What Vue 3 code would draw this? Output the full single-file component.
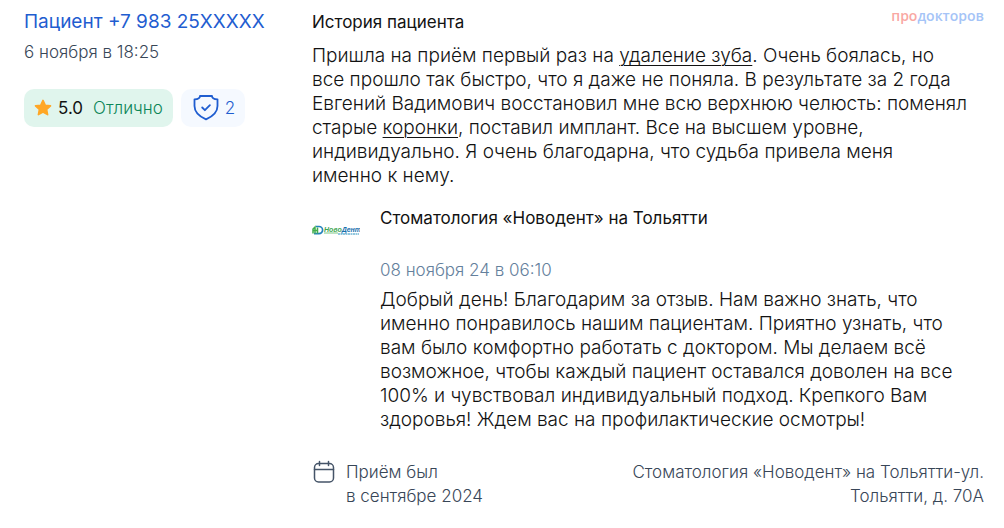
<script setup>
const rating = { score: '5.0', label: 'Отлично' }
const checks = 2
</script>

<template>
  <article class="review">
    <aside class="side">
      <a class="author" href="#">Пациент +7 983 25XXXXX</a>
      <time class="date">6 ноября в 18:25</time>
      <div class="badges">
        <div class="badge rating">
          <svg class="star" viewBox="0 0 18 18" aria-hidden="true">
            <path d="M9 1.400l2.200 4.800 5.300.6-3.900 3.600 1 5.200L9 13l-4.600 2.600 1-5.200L1.500 6.800l5.300-.6z" fill="#ffa726" stroke="#ffa726" stroke-width="1.600" stroke-linejoin="round" />
          </svg>
          <span class="score">{{ rating.score }}</span>
          <span>{{ rating.label }}</span>
        </div>
        <button class="badge checks" type="button" aria-label="Проверки отзыва: 2">
          <svg class="shield" viewBox="0 0 26 26" fill="none" stroke="#1f5dd0" stroke-width="1.800" stroke-linecap="round" stroke-linejoin="round" aria-hidden="true">
            <path d="M7 1h12c0 2 1.500 3.200 5.500 3.300v6.700c0 6.300-4.500 10.300-11.500 13.300C6 21.300 1.500 17.300 1.500 11V4.300C5.500 4.200 7 3 7 1z" />
            <path d="M9.200 12.500l2.700 2.700 5-5" />
          </svg>
          <span>{{ checks }}</span>
        </button>
      </div>
    </aside>

    <div class="main">
      <header class="head">
        <h2 class="title">История пациента</h2>
        <span class="brand"><span class="pro">про</span>докторов</span>
      </header>
      <p class="text">
        Пришла на приём первый раз на <a href="#">удаление зуба</a>. Очень боялась, но все&nbsp;прошло так быстро, что я даже не поняла. В результате за 2 года Евгений Вадимович восстановил мне всю верхнюю челюсть: поменял старые <a href="#">коронки</a>, поставил имплант. Все на высшем уровне, индивидуально. Я очень благодарна, что судьба привела меня именно&nbsp;к&nbsp;нему.
      </p>

      <section class="reply">
        <svg class="logo" viewBox="0 0 48 48" role="img" aria-label="НовоДент">
          <path d="M4 20.500h3a3.600 3.600 0 0 1 0 7.200H2" fill="none" stroke="#2583bd" stroke-width="1.700" />
          <path d="M1 27.500v-4.500l2-2v6.500M1 24.500h5M5.500 21.500v6" fill="none" stroke="#42ad4c" stroke-width="1.500" />
          <text x="12" y="26" class="logo-name"><tspan fill="#42a653">Ново</tspan><tspan fill="#176fad">Дент</tspan></text>
          <path d="M12 27h14" stroke="#7cc886" stroke-width="1" />
          <path d="M26 28h21" stroke="#70b5d4" stroke-width="1.500" stroke-dasharray="2 .5" />
        </svg>
        <div class="reply-body">
          <h3 class="title">Стоматология «Новодент» на Тольятти</h3>
          <time class="reply-date">08 ноября 24 в 06:10</time>
          <p class="text">
            Добрый день! Благодарим за отзыв. Нам важно знать, что именно понравилось нашим пациентам. Приятно узнать, что вам&nbsp;было комфортно работать с доктором. Мы делаем всё возможное, чтобы каждый пациент оставался доволен на все 100% и чувствовал индивидуальный подход. Крепкого Вам здоровья! Ждем вас на профилактические осмотры!
          </p>
        </div>
      </section>

      <footer class="foot">
        <svg class="calendar" viewBox="0 0 24 24" fill="none" stroke="#455468" stroke-width="1.500" stroke-linecap="round" aria-hidden="true">
          <rect x="2.500" y="3.500" width="19" height="18.500" rx="4" />
          <path d="M2.500 9.500h19M7.500 1.500v4M16.500 1.500v4" />
        </svg>
        <span>Приём был<br />в сентябре 2024</span>
        <address class="place">Стоматология «Новодент» на Тольятти-ул. Тольятти, д. 70А</address>
      </footer>
    </div>
  </article>
</template>

<style>
body {
  background: #fff;
}
</style>

<style scoped>
.review {
  display: grid;
  grid-template-columns: 264px minmax(0, 1fr);
  gap: 24px;
  padding: 10px 20px 20px 24px;
  font: 350 17px/24px Inter, "Noto Sans", sans-serif;
  color: #121212;
}
.side {
  display: flex;
  flex-direction: column;
}
.author {
  font-size: 19px;
  font-weight: 400;
  color: #1f5dd0;
  text-decoration: none;
}
.date {
  margin-top: 6px;
  color: #384657;
}
.badges {
  display: flex;
  gap: 8px;
  margin-top: 25px;
}
.badge {
  display: flex;
  align-items: center;
  height: 38px;
  padding: 0 10px;
  border: 0;
  border-radius: 10px;
  font: inherit;
}
.rating {
  gap: 6px;
  background: #e0f5ed;
  color: #0c8558;
}
.score {
  margin-right: 4px;
  font-weight: 400;
  color: #121212;
}
.star {
  width: 18px;
  height: 18px;
}
.badge.checks {
  gap: 6px;
  padding: 0 10px 0 12px;
  background: #f5f9ff;
  color: #1f5dd0;
}
.shield {
  width: 26px;
  height: 26px;
}
.head {
  display: flex;
  justify-content: space-between;
}
.title {
  margin: 0;
  font-size: 17px;
  font-weight: 400;
}
.brand {
  font: 600 14px/12px "Open Sans", sans-serif;
  color: #a5c4f7;
}
.pro {
  color: #f9a8a3;
}
.text {
  margin: 10px 0 0;
  font-size: 19px;
}
.text a {
  color: inherit;
  text-underline-offset: 3px;
  text-decoration-thickness: 1px;
}
.reply {
  display: flex;
  gap: 20px;
  margin-top: 18px;
}
.logo {
  flex: none;
  width: 48px;
  height: 48px;
}
.logo-name {
  font: italic 700 7px "Liberation Sans", sans-serif;
}
.reply-date {
  display: block;
  margin-top: 28px;
  color: #64809c;
}
.reply-body .text {
  margin-top: 6px;
}
.foot {
  display: flex;
  gap: 10px;
  margin-top: 28px;
  color: #384657;
}
.calendar {
  flex: none;
  width: 24px;
  height: 24px;
}
.place {
  width: 360px;
  margin-left: auto;
  font-style: normal;
  text-align: right;
}
</style>
